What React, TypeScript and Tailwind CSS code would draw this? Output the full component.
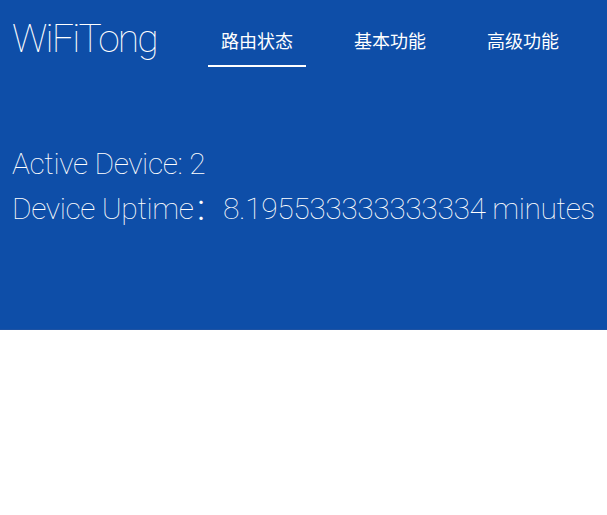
export default function App() {
  const nav = ["路由状态", "基本功能", "高级功能"];

  return (
    <div className="min-h-[515px] bg-white">
      <div className="h-[330px] bg-[#0e4ea8] border-b border-[#1d52a3] text-white">
        <header className="flex items-start">
          <h1 className="ml-3 mt-[15px] text-[39px] leading-[48px] font-thin tracking-[-1.8px] font-['Roboto',sans-serif]">
            WiFiTong
          </h1>
          <nav className="ml-[51px] flex gap-[35px]">
            {nav.map((item, i) => (
              <a
                key={item}
                className={`px-[13px] pt-[28px] pb-[13px] text-[18px] leading-6 font-normal font-['Noto_Sans_CJK_SC',sans-serif] border-b-2 ${
                  i === 0 ? "border-white" : "border-transparent"
                }`}
              >
                {item}
              </a>
            ))}
          </nav>
        </header>

        <div className="px-3 mt-[74px] text-[30px] leading-[45px] font-thin tracking-[-0.4px] font-['Roboto','Noto_Sans_CJK_SC',sans-serif]">
          <p>Active Device: 2</p>
          <p>Device Uptime：8.195533333333334 minutes</p>
        </div>
      </div>
    </div>
  );
}
